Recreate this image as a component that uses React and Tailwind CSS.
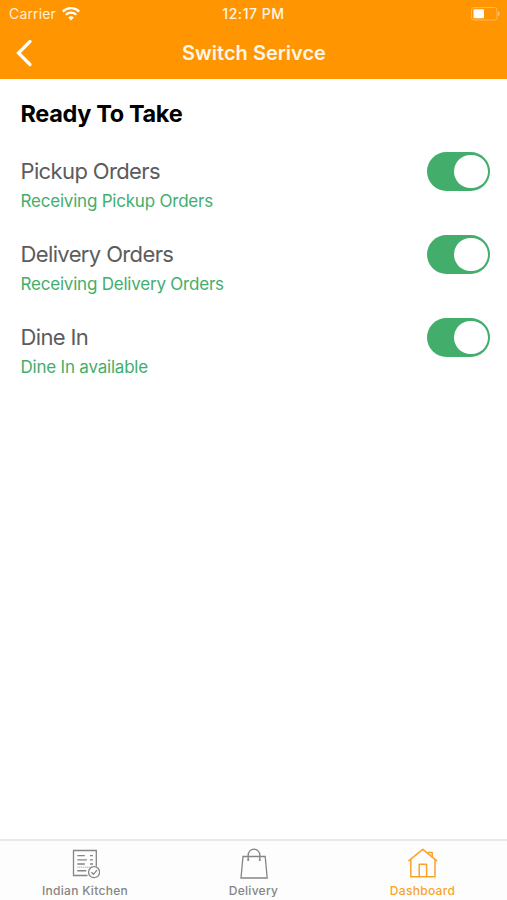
import React, { useState } from "react";

const services = [
  { id: "pickup", title: "Pickup Orders", status: "Receiving Pickup Orders" },
  { id: "delivery", title: "Delivery Orders", status: "Receiving Delivery Orders" },
  { id: "dinein", title: "Dine In", status: "Dine In available" },
];

const WifiIcon = () => (
  <svg width="18" height="14" viewBox="0 0 18 14" fill="none" stroke="white" strokeWidth="2.3">
    <path d="M0.8 4.6a11.6 11.6 0 0 1 16.4 0" />
    <path d="M3.8 7.8a7.4 7.4 0 0 1 10.4 0" />
    <path d="M9 13.4 6.2 10.6a4 4 0 0 1 5.6 0z" fill="white" stroke="none" />
  </svg>
);

const BatteryIcon = () => (
  <svg width="32" height="16" viewBox="0 0 32 16" fill="none">
    <rect x="1.5" y="1.5" width="25.5" height="12.5" rx="2.5" stroke="#ffb95a" strokeWidth="1" />
    <rect x="3.5" y="3.2" width="10.5" height="9" rx="1" fill="white" />
    <path d="M28 5.2q3.4 2.6 0 5.2z" fill="#ffc271" />
  </svg>
);

const KitchenIcon = () => (
  <svg width="30" height="32" viewBox="0 0 30 32" fill="none" stroke="currentColor" strokeWidth="1.3">
    <path d="M17.5 28.5H3.5v-25h22.8v16" />
    <path d="M7.3 8.6h7.5M7.3 12.9h9.5M7.3 17h7.5M7.3 23.8h9M20 8.6h3M20 12.9h3M20 17h3" strokeWidth="1.4" />
    <path d="M7.3 20.2h15" strokeDasharray="1 1" strokeWidth="0.9" />
    <circle cx="24.1" cy="25.2" r="5.5" />
    <path d="m21.4 25.2 2 2.1 3.6-4.2" />
  </svg>
);

const BagIcon = () => (
  <svg width="30" height="32" viewBox="0 0 30 32" fill="none" stroke="currentColor" strokeWidth="1.3">
    <path d="M4 9.5h22.2l2 21.5H2z" />
    <path d="M9.2 12.8V8a5.8 5.8 0 0 1 11.6 0v4.8" />
    <circle cx="9.2" cy="13" r="1.1" fill="currentColor" stroke="none" />
    <circle cx="20.8" cy="13" r="1.1" fill="currentColor" stroke="none" />
  </svg>
);

const HouseIcon = () => (
  <svg width="30" height="32" viewBox="0 0 30 32" fill="none" stroke="currentColor" strokeWidth="1.5" strokeLinejoin="round" strokeLinecap="round">
    <path d="M2.8 13v16.8h24.2V13" />
    <path d="M1 13.7 14.8 2.3 28.6 13.7" />
    <path d="M20.2 6.3V5.4h4v4.3" />
    <path d="M11.2 29.4V17.3h7.4v12.1" />
  </svg>
);

const Toggle = ({ label, checked, onChange }) => (
  <button
    type="button"
    role="switch"
    aria-checked={checked}
    aria-label={label}
    onClick={onChange}
    className={`flex h-[38.5px] w-[63px] items-center rounded-full px-[2.5px] transition ${
      checked ? "justify-end bg-[#43ae6c]" : "justify-start bg-gray-300"
    }`}
  >
    <span className="h-[33.5px] w-[33.5px] rounded-full bg-white" />
  </button>
);

const App = () => {
  const [enabled, setEnabled] = useState({ pickup: true, delivery: true, dinein: true });

  const toggle = (id) => setEnabled({ ...enabled, [id]: !enabled[id] });

  return (
    <div className="flex h-[900px] w-[507px] flex-col overflow-hidden bg-white font-['Inter',sans-serif]">
      <header className="h-[79px] bg-[#ff9500] text-white">
        <div className="grid h-[27px] grid-cols-3 items-center text-[14px] leading-[26px]">
          <div className="flex items-center gap-[6px] pl-[9px] text-[#fff0d9]">
            <span className="tracking-[0.15px]">Carrier</span>
            <WifiIcon />
          </div>
          <span className="text-center font-medium tracking-[0.55px] text-[#fff6e8]">12:17 PM</span>
          <div className="flex justify-end pr-[5px]">
            <BatteryIcon />
          </div>
        </div>
        <div className="grid h-[52px] grid-cols-[60px_1fr_60px] items-center">
          <button type="button" aria-label="Back" className="pl-[16px]">
            <svg width="18" height="28" viewBox="0 0 18 28" fill="none" stroke="white" strokeWidth="3.2" strokeLinecap="round">
              <path d="M14 2.5 2.5 14 14 25.5" />
            </svg>
          </button>
          <h1 className="pl-px text-center text-[20px] font-semibold text-[#fff6e8]">Switch Serivce</h1>
        </div>
      </header>

      <main className="flex-1 pr-[17px] pl-[20.5px]">
        <h2 className="pt-[17px] text-[23.5px] leading-9 font-bold tracking-[-0.35px] text-black">Ready To Take</h2>
        <div className="pt-[20px]">
          {services.map((service) => (
            <div key={service.id} className="flex h-[83px] items-start justify-between">
              <div>
                <p className="text-[22px] leading-[38px] tracking-[-0.63px] text-[#5c5c5c]">{service.title}</p>
                <p className="pt-px text-[17px] leading-[20px] tracking-[-0.21px] text-[#43ae6c]">{service.status}</p>
              </div>
              <Toggle label={service.title} checked={enabled[service.id]} onChange={() => toggle(service.id)} />
            </div>
          ))}
        </div>
      </main>

      <nav className="grid h-[61px] grid-cols-3 border-t-2 border-[#e9e9e9] bg-[#fdfdfd] text-[12px] font-medium text-[#858585]">
        <button type="button" className="flex flex-col items-center pt-[6px]">
          <KitchenIcon />
          <span className="mt-[4px] pl-px leading-4 tracking-[0.3px]">Indian Kitchen</span>
        </button>
        <button type="button" className="flex flex-col items-center pt-[6px]">
          <BagIcon />
          <span className="mt-[4px] leading-4 tracking-[0.3px]">Delivery</span>
        </button>
        <button type="button" className="flex flex-col items-center pt-[6px] text-[#f9a32b]">
          <HouseIcon />
          <span className="mt-[4px] leading-4 tracking-[0.3px]">Dashboard</span>
        </button>
      </nav>
    </div>
  );
};

export default App;
